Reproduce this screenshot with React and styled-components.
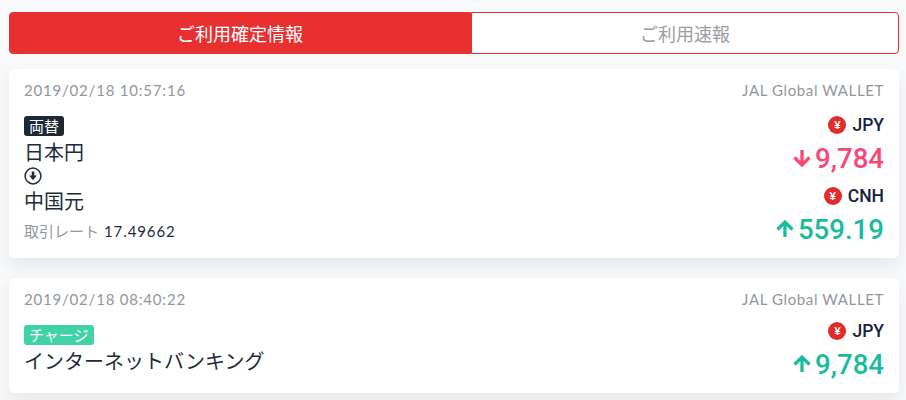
import React from "react";
import styled, { createGlobalStyle } from "styled-components";

const Global = createGlobalStyle`
  html, body { margin: 0; padding: 0; background: #f8f9fa; }
  body { width: 906px; height: 400px; overflow: hidden; font-family: "Lato", "Noto Sans CJK JP", sans-serif; }
`;
const Page = styled.div`
  display: flex; flex-direction: column; padding: 12px 7px 0 9px;
`;
const Tabs = styled.div`
  display: flex; height: 42px; margin-bottom: 15px;
`;
const Tab = styled.div`
  box-sizing: border-box; display: flex; align-items: center; justify-content: center;
  flex: ${p => (p.$active ? "0 0 462px" : "1")};
  font-size: 18px; font-family: "Noto Sans CJK JP", sans-serif; font-weight: 400;
  color: ${p => (p.$active ? "#fff" : "#9a9ea3")};
  background: ${p => (p.$active ? "#e83030" : "#fff")};
  border: 1px solid #e83030;
  border-radius: ${p => (p.$active ? "4px 0 0 4px" : "0 4px 4px 0")};
`;
const Card = styled.div`
  display: flex; flex-direction: column; box-sizing: border-box; background: #fff; border-radius: 5px;
  padding: 10px 15px 0; margin-bottom: 20px; height: ${p => p.$h}px;
  box-shadow: 0 8px 16px rgba(30, 40, 70, 0.08);
`;
const CardHead = styled.div`
  display: flex; justify-content: space-between; align-items: center; height: 22px;
  font-size: 15px; color: #93979c; margin-bottom: 9px;
`;
const Stamp = styled.span`letter-spacing: .8px;`;
const Wallet = styled.span`letter-spacing: .62px;`;
const Body = styled.div`display: flex; justify-content: space-between;`;
const Left = styled.div`display: flex; flex-direction: column; align-items: flex-start; padding-top: 6px;`;
const Right = styled.div`display: flex; flex-direction: column; align-items: flex-end; padding-top: ${p => p.$top}px;`;
const Badge = styled.span`
  display: inline-flex; align-items: center; height: 20px; padding: 0 5px; border-radius: 3px;
  font-size: 15px; line-height: 20px; color: #fff; background: ${p => p.$bg};
  font-family: "Noto Sans CJK JP", sans-serif; font-weight: 400;
`;
const Line = styled.div`
  font-size: 20px; line-height: 31px; color: #1e2b3a; font-family: "Noto Sans CJK JP", sans-serif; font-weight: 400;
`;
const Glyph = styled.svg`display: block; width: 18px; height: 18px; margin: 0;`;
const Rate = styled.div`
  display: flex; gap: 5px; font-size: 15px; line-height: 22px; color: #93979c; margin-top: 4px;
  font-family: "Noto Sans CJK JP", sans-serif; font-weight: 400;
`;
const RateValue = styled.span`font-family: "Lato", sans-serif; font-weight: 400; color: #1e2b3a; letter-spacing: .9px;`;
const Currency = styled.div`
  display: flex; align-items: center; gap: 6px; height: 24px; font-family: "Roboto", sans-serif;
  font-size: 17.5px; font-weight: 500; color: #14233f;
`;
const Coin = styled.span`
  display: inline-flex; align-items: center; justify-content: center; width: 18px; height: 18px; border-radius: 50%;
  background: #e22b2b; color: #fff; font-size: 11.5px; font-weight: 700; font-family: "Liberation Sans", sans-serif;
`;
const Amount = styled.div`
  display: flex; align-items: center; gap: 4px; height: 42px; margin-bottom: 5px; font-family: "Roboto", sans-serif;
  font-size: 27.6px; font-weight: 500; color: ${p => p.$color};
`;
const ArrowIcon = styled.svg`width: 18px; height: 20px; display: block;`;

const Arrow = ({ down, color }) => (
  <ArrowIcon viewBox="0 0 18 20" fill="none" stroke={color} strokeWidth="3.3">
    {down ? <path d="M9 2v15M1.5 9.5L9 17 16.5 9.5" /> : <path d="M9 18V3M1.5 10.5L9 3 16.5 10.5" />}
  </ArrowIcon>
);

const Money = ({ code, value, down }) => {
  const color = down ? "#fb4678" : "#1abc9c";
  return (
    <>
      <Currency><Coin>¥</Coin>{code}</Currency>
      <Amount $color={color}><Arrow down={down} color={color} />{value}</Amount>
    </>
  );
};

export default function App() {
  return (
    <Page>
      <Global />
      <Tabs>
        <Tab $active>ご利用確定情報</Tab>
        <Tab>ご利用速報</Tab>
      </Tabs>
      <Card $h={189}>
        <CardHead><Stamp>2019/02/18 10:57:16</Stamp><Wallet>JAL Global WALLET</Wallet></CardHead>
        <Body>
          <Left>
            <Badge $bg="#1c2836">両替</Badge>
            <Line>日本円</Line>
            <Glyph viewBox="0 0 18 18" fill="none">
              <circle cx="9" cy="9" r="7.9" stroke="#1e2b3a" strokeWidth="1.5" />
              <path d="M9 4.5v5" stroke="#1e2b3a" strokeWidth="2.6" />
              <path d="M5.2 8.6h7.6L9 13.2z" fill="#1e2b3a" />
            </Glyph>
            <Line>中国元</Line>
            <Rate>取引レート<RateValue>17.49662</RateValue></Rate>
          </Left>
          <Right $top={3}>
            <Money code="JPY" value="9,784" down />
            <Money code="CNH" value="559.19" />
          </Right>
        </Body>
      </Card>
      <Card $h={115}>
        <CardHead><Stamp>2019/02/18 08:40:22</Stamp><Wallet>JAL Global WALLET</Wallet></CardHead>
        <Body>
          <Left>
            <Badge $bg="#3fd3a5">チャージ</Badge>
            <Line>インターネットバンキング</Line>
          </Left>
          <Right $top={0}>
            <Money code="JPY" value="9,784" />
          </Right>
        </Body>
      </Card>
    </Page>
  );
}
